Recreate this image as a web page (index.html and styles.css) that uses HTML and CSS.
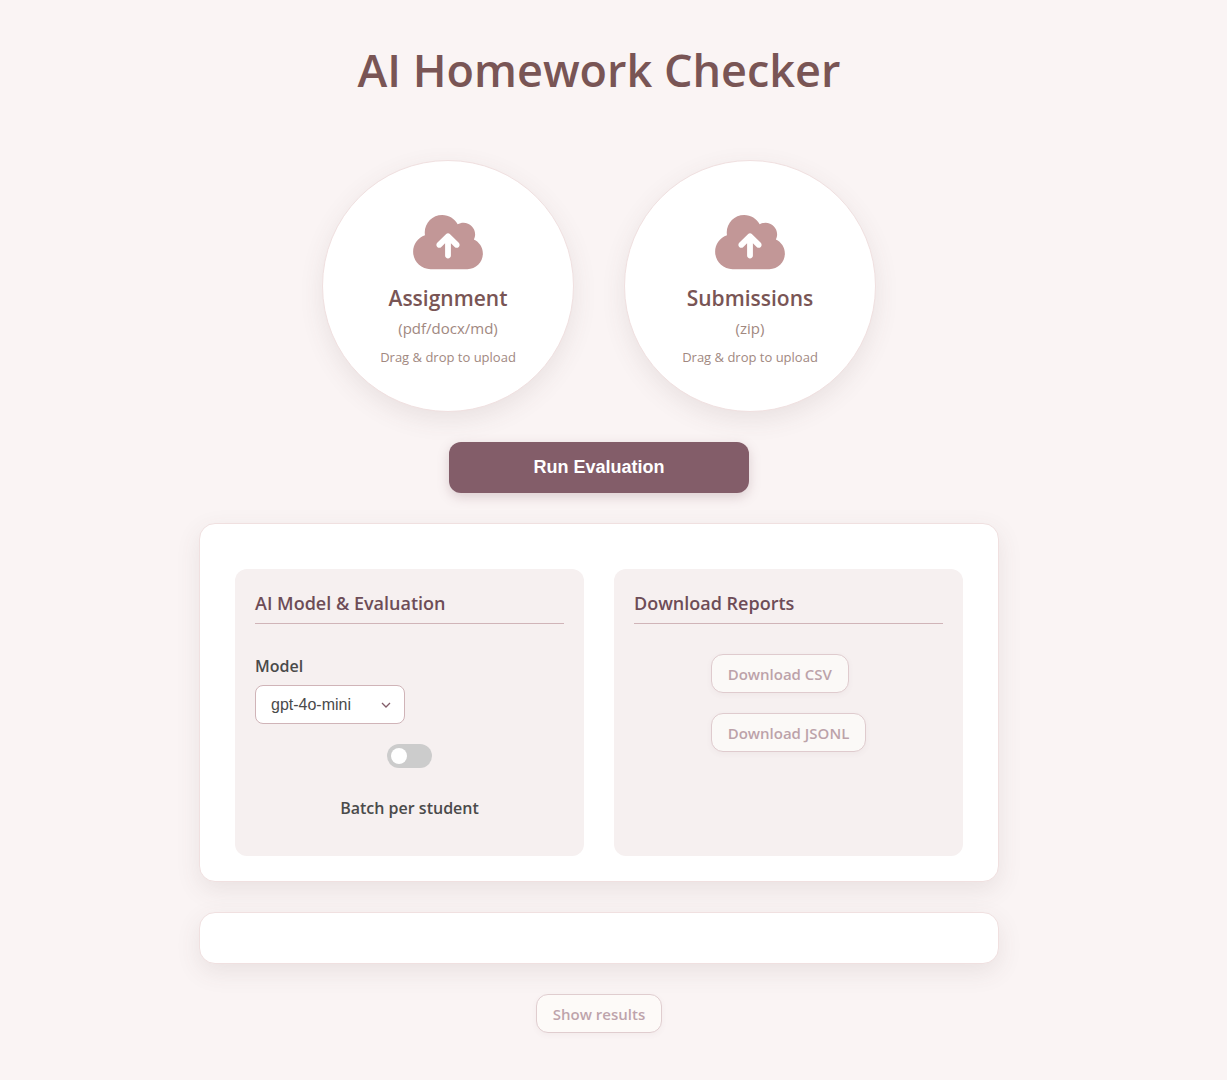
FILE: index.html
```html
<!DOCTYPE html>
<html lang="en">
<head>
<meta charset="utf-8">
<meta name="viewport" content="width=device-width, initial-scale=1">
<title>AI Homework Checker</title>
<link rel="stylesheet" href="styles.css">
</head>
<body>
<svg class="sprite" aria-hidden="true">
  <symbol id="cloud-up" viewBox="0 0 576 512">
    <path fill="currentColor" fill-rule="evenodd" d="M144 480C64.500 480 0 415.500 0 336c0-63.400 41-117.200 97.900-136.500-1.300-7.700-1.900-15.500-1.900-23.500 0-79.500 64.500-144 144-144 55.400 0 103.500 31.300 127.600 77.100 14.200-8.300 30.800-13.100 48.400-13.100 53 0 96 43 96 96 0 15.700-3.800 30.600-10.500 43.700 44 20.300 74.500 64.700 74.500 116.300 0 70.700-57.300 128-128 128zM305 191c-9.400-9.400-24.600-9.400-33.900 0l-72 72c-9.400 9.400-9.400 24.600 0 33.900s24.600 9.400 33.900 0l31-31V368c0 13.300 10.700 24 24 24s24-10.700 24-24V265.900l31 31c9.400 9.400 24.600 9.400 33.900 0s9.400-24.600 0-33.900z"/>
  </symbol>
</svg>
<main class="page">
  <h1 class="title">AI Homework Checker</h1>

  <div class="uploads">
    <button type="button" class="upload">
      <svg class="upload-icon" aria-hidden="true"><use href="#cloud-up"/></svg>
      <span class="upload-name">Assignment</span>
      <span class="upload-type">(pdf/docx/md)</span>
      <span class="upload-hint">Drag &amp; drop to upload</span>
    </button>
    <button type="button" class="upload">
      <svg class="upload-icon" aria-hidden="true"><use href="#cloud-up"/></svg>
      <span class="upload-name">Submissions</span>
      <span class="upload-type">(zip)</span>
      <span class="upload-hint">Drag &amp; drop to upload</span>
    </button>
  </div>

  <button type="button" class="run">Run Evaluation</button>

  <div class="card settings">
    <section class="panel">
      <h2 class="panel-title">AI Model &amp; Evaluation</h2>
      <label class="field-label" for="model">Model</label>
      <div class="select-wrap">
        <select id="model" class="select">
          <option>gpt-4o-mini</option>
        </select>
        <svg class="chevron" viewBox="0 0 10 6" aria-hidden="true"><path d="M1 1l4 4 4-4" fill="none" stroke="currentColor" stroke-width="1.300"/></svg>
      </div>
      <div class="batch">
        <input type="checkbox" id="batch" class="switch">
        <label class="field-label" for="batch">Batch per student</label>
      </div>
    </section>
    <section class="panel">
      <h2 class="panel-title">Download Reports</h2>
      <div class="downloads">
        <button type="button" class="ghost" disabled>Download CSV</button>
        <button type="button" class="ghost" disabled>Download JSONL</button>
      </div>
    </section>
  </div>

  <div class="card results"></div>

  <button type="button" class="ghost" disabled>Show results</button>
</main>
</body>
</html>
```
FILE: styles.css
```css
* {
  box-sizing: border-box;
}

body {
  margin: 0;
  padding: 38px 44px 40px 15px;
  background: #faf4f4;
  color: #4a4a4a;
  font-family: "Segoe UI", "Open Sans", sans-serif;
}

.sprite {
  display: none;
}

.page {
  display: flex;
  flex-direction: column;
  align-items: center;
  max-width: 800px;
  margin: 0 auto;
}

.title {
  margin: 0 0 58px;
  color: #795555;
  font-size: 45px;
  font-weight: 600;
  line-height: 64px;
}

.uploads {
  display: flex;
  flex-wrap: wrap;
  justify-content: center;
  gap: 50px;
  margin-bottom: 30px;
}

.upload {
  display: flex;
  flex-direction: column;
  align-items: center;
  justify-content: center;
  width: 252px;
  height: 252px;
  padding: 5px 0 0;
  border: 1px solid #f0e0e0;
  border-radius: 50%;
  background: #fff;
  box-shadow: 0 8px 24px rgba(93, 64, 64, 0.1);
  color: #795555;
  font-family: inherit;
  cursor: pointer;
}

.upload-icon {
  width: 70px;
  height: 62px;
  margin-bottom: 10px;
  color: #c29797;
}

.upload-name {
  margin-bottom: 5px;
  font-size: 21px;
  font-weight: 600;
  line-height: 30px;
}

.upload-type {
  margin-bottom: 10px;
  color: #a1887f;
  font-size: 15px;
  line-height: 20px;
}

.upload-hint {
  color: #a1887f;
  font-size: 13px;
  line-height: 18px;
}

.run {
  width: 300px;
  max-width: 100%;
  height: 51px;
  margin-bottom: 30px;
  border: 0;
  border-radius: 12px;
  background: #835d69;
  box-shadow: 0 4px 12px rgba(131, 93, 105, 0.25);
  color: #fff;
  font: bold 18px "Liberation Sans", Arial, sans-serif;
  cursor: pointer;
}

.card {
  width: 100%;
  margin-bottom: 30px;
  border: 1px solid #f0e0e0;
  border-radius: 16px;
  background: #fff;
  box-shadow: 0 8px 24px rgba(93, 64, 64, 0.1);
}

.settings {
  display: grid;
  grid-template-columns: repeat(auto-fit, minmax(260px, 1fr));
  gap: 30px;
  padding: 45px 35px 25px;
}

.results {
  min-height: 52px;
}

.panel {
  padding: 20px 20px 36px;
  border-radius: 12px;
  background: #f6f0f0;
}

.panel-title {
  margin: 0 0 30px;
  padding-bottom: 6px;
  border-bottom: 1px solid #d0b4b8;
  color: #6d4c57;
  font-size: 18px;
  font-weight: 600;
  line-height: 28px;
}

.field-label {
  display: block;
  font-size: 16px;
  font-weight: 600;
  line-height: 24px;
}

.select-wrap {
  position: relative;
  width: 150px;
  margin: 7px 0 20px;
}

.select {
  appearance: none;
  width: 100%;
  height: 39px;
  padding: 0 32px 0 15px;
  border: 1px solid #d0b4b8;
  border-radius: 8px;
  background: #fff;
  color: #4a4a4a;
  font: 16px "Liberation Sans", Arial, sans-serif;
}

.chevron {
  position: absolute;
  top: 17px;
  right: 14px;
  width: 10px;
  height: 6px;
  color: #835d69;
  pointer-events: none;
}

.batch {
  display: flex;
  flex-direction: column;
  align-items: center;
  gap: 28px;
}

.switch {
  appearance: none;
  display: flex;
  align-items: center;
  width: 45px;
  height: 24px;
  margin: 0;
  padding: 4px;
  border-radius: 12px;
  background: #ccc;
  cursor: pointer;
}

.switch::before {
  content: "";
  width: 16px;
  height: 16px;
  border-radius: 50%;
  background: #fff;
}

.switch:checked {
  justify-content: flex-end;
  background: #835d69;
}

.downloads {
  display: flex;
  flex-direction: column;
  align-items: flex-start;
  gap: 20px;
  width: fit-content;
  margin: 0 auto;
}

.ghost {
  height: 39px;
  padding: 0 16px;
  border: 1px solid #d0b4b8;
  border-radius: 12px;
  background: #fffffc;
  box-shadow: 0 2px 5px rgba(131, 93, 105, 0.08);
  color: #976f7b;
  font-family: inherit;
  font-size: 15px;
  font-weight: 600;
  white-space: nowrap;
}

.ghost:disabled {
  opacity: 0.6;
}
```
